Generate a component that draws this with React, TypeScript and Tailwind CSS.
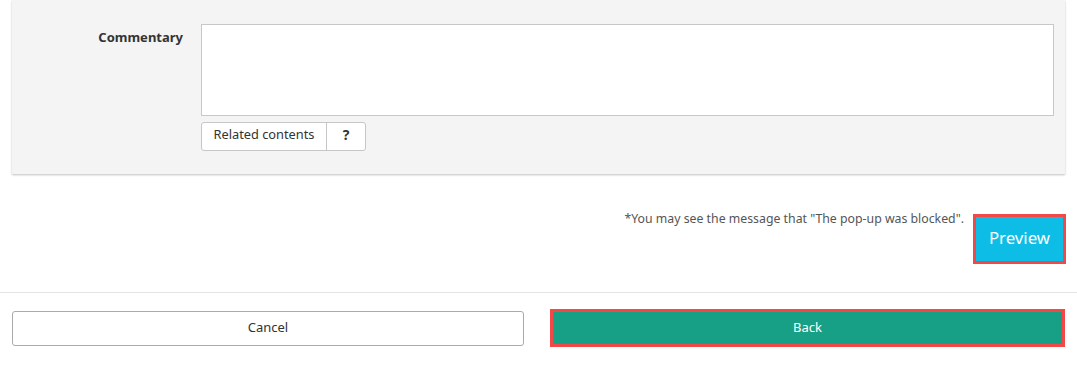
export default function App() {
  return (
    <div className="w-[1077px] h-[365px] bg-white overflow-hidden text-[#333]" style={{ fontFamily: '"Noto Sans", "Noto Sans CJK JP", sans-serif' }}>
      {/* Form panel */}
      <div className="ml-[12px] w-[1053px] bg-[#f4f4f4] pt-[24px] pb-[23px] shadow-[0_1px_2px_rgba(0,0,0,0.25)]">
        <div className="flex">
          <div className="w-[171px] text-right text-[13px] font-bold text-[#333] pt-[4px] leading-[18px]">Commentary</div>
          <div className="ml-[18px] flex flex-col">
            <div className="w-[853px] h-[92px] bg-white border border-[#c8c8c8]" />
            <div className="mt-[6px] flex h-[29px] w-[165px] bg-white border border-[#c6c6c6] rounded-[3px]">
              <div className="w-[125px] flex items-center justify-center pb-[4px] text-[12.8px] text-[#333] border-r border-[#c6c6c6]">Related contents</div>
              <div className="flex-1 flex items-center justify-center pb-[4px] text-[14px] font-bold text-[#333]">?</div>
            </div>
          </div>
        </div>
      </div>

      {/* Preview */}
      <div className="flex justify-end items-start pr-[11px] mt-[40px] h-[50px]">
        <div className="text-[12.3px] text-[#555] leading-[14px] mt-[-2px] mr-[9px]">*You may see the message that "The pop-up was blocked".</div>
        <button className="w-[93px] h-[50px] bg-[#0ebde5] border-[3px] border-[#f24848] text-white text-[16.8px] pb-[2px] flex items-center justify-center">Preview</button>
      </div>

      <div className="mt-[28px] h-px bg-[#e4e4e4]" />

      {/* Footer buttons */}
      <div className="flex items-center justify-between px-[12px] mt-[16px]">
        <button className="w-[512px] h-[35px] border border-[#aaa] rounded-[3px] bg-white text-[13px] text-[#333]">Cancel</button>
        <button className="w-[515px] h-[38px] bg-[#17a086] border-[3px] border-[#f24848] text-white text-[13px]">Back</button>
      </div>
    </div>
  )
}
